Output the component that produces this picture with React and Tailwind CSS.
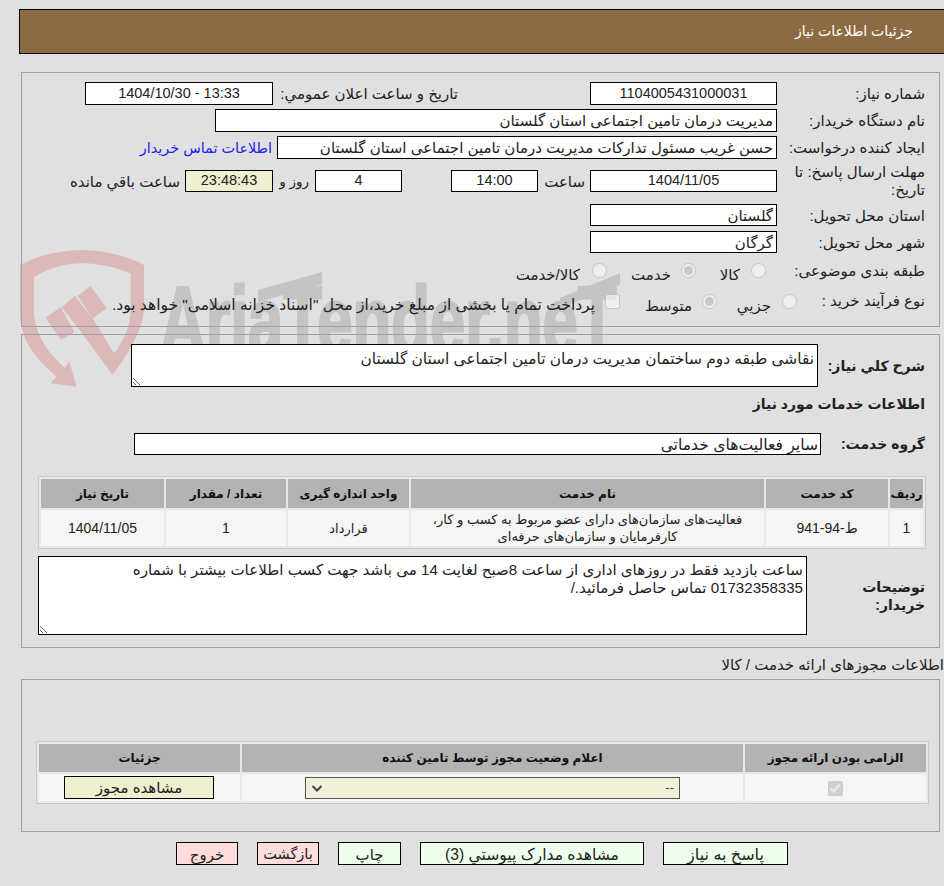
const fieldBox = 'border border-black bg-white px-[3px] flex items-center overflow-hidden whitespace-nowrap';

function Field({ className, center, children }) {
  return (
    <div className={`${fieldBox} ${center ? 'justify-center text-[14.5px]' : 'pt-[2px]'} ${className}`} dir="rtl">
      {children}
    </div>
  );
}

function Label({ children }) {
  return <div className="w-[148px] shrink-0 pt-[2px] text-[#222]">{children}</div>;
}

function Radio({ checked, className }) {
  return <input type="radio" disabled checked={checked} readOnly className={`w-[15px] h-[15px] m-0 shrink-0 ${className}`} />;
}

function Watermark() {
  return (
    <div className="absolute left-0 top-0 w-[944px] h-[400px] overflow-hidden pointer-events-none">
      <svg className="absolute left-[10px] top-[245px]" width="140" height="150" viewBox="0 0 420 450">
        <path
          d="M30 60 C90 30 150 15 215 15 C280 15 345 30 402 60 L402 190 C400 250 360 320 308 390 L205 250 L245 215 L312 325 C345 285 362 240 362 190 L362 85 C310 65 260 55 215 55 C165 55 115 70 72 97 L72 200 C75 270 115 325 165 368 L178 350 L200 425 L122 415 L140 395 C70 335 30 280 30 200 Z"
          fill="#dcb9b9"
        />
        <path d="M107 218 L152 187 L193 262 L153 285 Z M155 187 L195 153 L245 217 L205 250 Z M203 153 L242 123 L290 190 L248 220 Z" fill="#dcb9b9" />
      </svg>
      <div className="absolute left-[160px] top-[266px] origin-top-left scale-x-[0.66] font-['Liberation_Sans',sans-serif] font-bold text-[96px] leading-[110px] text-[#c4c4c4] [-webkit-text-stroke:3px_#c4c4c4] whitespace-nowrap" dir="ltr">
        AriaTender.neT
      </div>
      <svg className="absolute left-[250px] top-[268px]" width="380" height="40" viewBox="0 0 380 40">
        <path d="M8 22 L72 4 L72 16 L8 34 Z M310 30 L370 5 L370 17 L310 40 Z" fill="#c4c4c4" />
      </svg>
    </div>
  );
}

function Th({ className, children }) {
  return <th className={`bg-[#b3b3b3] font-bold text-[12px] text-[#111] text-center p-0 ${className}`}>{children}</th>;
}

function Td({ className, children }) {
  return <td className={`bg-[#f5f5f5] text-center text-[13px] text-[#222] p-0 leading-[17px] ${className}`}>{children}</td>;
}

function FooterButton({ className, children }) {
  return (
    <div className={`h-[23px] border border-black flex items-center justify-center text-[#222] pt-[3px] ${className}`}>
      {children}
    </div>
  );
}

export default function App() {
  return (
    <div className="relative w-[944px] h-[886px] overflow-hidden bg-[#e0e0e0] font-['Liberation_Sans','DejaVu_Sans',sans-serif] text-[15px] text-[#222]" dir="rtl">
      <Watermark />
      <div className="relative pt-[9px]">
        <div className="ml-[19px] -mr-[2px] h-[45px] bg-[#8c6b42] border border-black flex items-center pr-[32px] pb-[1px] text-[14px] text-white">
          جزئیات اطلاعات نیاز
        </div>

        <div className="mt-[18px] ml-[21px] mr-[4px] h-[255px] border border-[#a0a0a0] pr-[14px] pt-[9px]">
          <div className="flex items-center h-[23px]">
            <Label>شماره نیاز:</Label>
            <Field center className="w-[187px] h-[23px] shrink-0">1104005431000031</Field>
            <div className="mr-[132px] w-[180px] pt-[2px] whitespace-nowrap">تاریخ و ساعت اعلان عمومي:</div>
            <Field center className="w-[188px] h-[23px] mr-[5px]">13:33 - 1404/10/30</Field>
          </div>
          <div className="flex items-center h-[23px] mt-[4px]">
            <Label>نام دستگاه خریدار:</Label>
            <Field className="w-[562px] h-[23px]">مدیریت درمان تامین اجتماعی استان گلستان</Field>
          </div>
          <div className="flex items-center h-[23px] mt-[4px]">
            <Label>ایجاد کننده درخواست:</Label>
            <Field className="w-[500px] h-[23px]">حسن غریب مسئول تدارکات مدیریت درمان تامین اجتماعی استان گلستان</Field>
            <a href="#" className="mr-[5px] pt-[2px] text-[14.4px] text-[#2222ee] whitespace-nowrap">اطلاعات تماس خریدار</a>
          </div>
          <div className="flex items-center h-[38px] mt-[3px]">
            <div className="w-[148px] shrink-0 leading-[18px]">مهلت ارسال پاسخ: تا تاریخ:</div>
            <Field center className="w-[187px] h-[22px] shrink-0">1404/11/05</Field>
            <div className="w-[52px] shrink-0 pr-[5px] pt-[2px]">ساعت</div>
            <Field center className="w-[87px] h-[22px] shrink-0">14:00</Field>
            <div className="w-[49px] shrink-0" />
            <Field center className="w-[87px] h-[22px] shrink-0">4</Field>
            <div className="w-[42px] shrink-0 pr-[6px] pt-[2px] text-[13.5px] whitespace-nowrap">روز و</div>
            <Field center className="w-[88px] h-[22px] shrink-0 !bg-[#f0f0d0]">23:48:43</Field>
            <div className="mr-[5px] pt-[2px] whitespace-nowrap">ساعت باقي مانده</div>
          </div>
          <div className="flex items-center h-[22px] mt-[4px]">
            <Label>استان محل تحویل:</Label>
            <Field className="w-[187px] h-[22px]">گلستان</Field>
          </div>
          <div className="flex items-center h-[22px] mt-[5px]">
            <Label>شهر محل تحویل:</Label>
            <Field className="w-[187px] h-[22px]">گرگان</Field>
          </div>
          <div className="flex items-center h-[20px] mt-[7px]">
            <Label>طبقه بندی موضوعی:</Label>
            <Radio className="mr-[11px]" />
            <div className="w-[55px] pr-[11px] pt-[10px]">کالا</div>
            <Radio checked />
            <div className="w-[74px] pr-[10px] pt-[10px]">خدمت</div>
            <Radio />
            <div className="pr-[12px] pt-[10px]">کالا/خدمت</div>
          </div>
          <div className="flex items-center h-[20px] mt-[11px]">
            <div className="w-[128px] shrink-0">نوع فرآیند خرید :</div>
            <Radio />
            <div className="w-[65px] pr-[11px] pt-[10px]">جزيي</div>
            <Radio checked />
            <div className="w-[82px] pr-[10px] pt-[10px]">متوسط</div>
            <input type="checkbox" disabled className="w-[15px] h-[15px] m-0 shrink-0" />
            <div className="pr-[10px] pt-[8px] text-[15.5px] whitespace-nowrap">پرداخت تمام یا بخشی از مبلغ خرید،از محل "اسناد خزانه اسلامی" خواهد بود.</div>
          </div>
        </div>

        <div className="mt-[7px] ml-[21px] mr-[4px] h-[314px] border border-[#a0a0a0] pr-[14px] pt-[9px]">
          <div className="flex items-center h-[43px]">
            <div className="w-[107px] shrink-0 font-bold text-[14px] pt-[2px]">شرح کلي نیاز:</div>
            <textarea
              readOnly
              defaultValue="نقاشی طبقه دوم ساختمان مدیریت درمان تامین اجتماعی استان گلستان"
              className="w-[687px] h-[43px] border border-black bg-white px-[3px] pt-[2px] text-[15.4px] outline-none resize block"
            />
          </div>
          <div className="font-bold text-[14px] mt-[7px] h-[20px]">اطلاعات خدمات مورد نیاز</div>
          <div className="flex items-center h-[22px] mt-[19px]">
            <div className="w-[104px] shrink-0 font-bold text-[14px]">گروه خدمت:</div>
            <Field className="w-[687px] h-[22px] !px-[2px] text-[15.6px]">سایر فعالیت‌های خدماتی</Field>
          </div>
          <div className="w-[888px] h-[73px] mt-[21px] -mr-[1px] border border-[#c8c8c8] bg-[#e8e8e8]">
            <table className="w-[886px] h-[71px] table-fixed border-separate border-spacing-[2px]">
              <colgroup>
                <col className="w-[33px]" />
                <col className="w-[122px]" />
                <col className="w-[353px]" />
                <col className="w-[121px]" />
                <col className="w-[120px]" />
                <col />
              </colgroup>
              <thead>
                <tr className="h-[29px]">
                  <Th>ردیف</Th>
                  <Th>کد خدمت</Th>
                  <Th>نام خدمت</Th>
                  <Th>واحد اندازه گیری</Th>
                  <Th>تعداد / مقدار</Th>
                  <Th>تاریخ نیاز</Th>
                </tr>
              </thead>
              <tbody>
                <tr>
                  <Td className="!text-[14px]">1</Td>
                  <Td className="!text-[14px]">ط-94-941</Td>
                  <Td>فعالیت‌های سازمان‌های دارای عضو مربوط به کسب و کار، کارفرمایان و سازمان‌های حرفه‌ای</Td>
                  <Td>قرارداد</Td>
                  <Td className="!text-[14px]">1</Td>
                  <Td className="!text-[14px]">1404/11/05</Td>
                </tr>
              </tbody>
            </table>
          </div>
          <div className="flex items-center h-[79px] mt-[7px]">
            <div className="w-[118px] shrink-0 font-bold text-[14px] leading-[18px] pl-[40px]">توضیحات خریدار:</div>
            <textarea
              readOnly
              defaultValue="ساعت بازدید فقط در روزهای اداری از ساعت 8صبح لغایت 14 می باشد جهت کسب اطلاعات بیشتر با شماره 01732358335 تماس حاصل فرمائید./"
              className="w-[769px] h-[79px] border border-black bg-white px-[3px] pt-[4px] text-[15.1px] outline-none resize block leading-[18px]"
            />
          </div>
        </div>

        <div className="h-[31px] pt-[3px] flex items-center whitespace-nowrap">اطلاعات مجوزهای ارائه خدمت / کالا</div>

        <div className="ml-[21px] mr-[4px] h-[153px] border border-[#a0a0a0] pr-[10px] pt-[61px]">
          <div className="w-[893px] h-[63px] border border-[#c8c8c8] bg-[#e8e8e8]">
            <table className="w-[891px] h-[61px] table-fixed border-separate border-spacing-[2px]">
              <colgroup>
                <col className="w-[181px]" />
                <col className="w-[501px]" />
                <col />
              </colgroup>
              <thead>
                <tr className="h-[28px]">
                  <Th>الزامی بودن ارائه مجوز</Th>
                  <Th>اعلام وضعیت مجوز توسط تامین کننده</Th>
                  <Th>جزئیات</Th>
                </tr>
              </thead>
              <tbody>
                <tr>
                  <Td>
                    <input type="checkbox" disabled defaultChecked className="w-[15px] h-[15px] m-0 align-middle" />
                  </Td>
                  <Td>
                    <div className="mr-[63px] w-[375px] h-[22px] border border-[#555] bg-[#f0f0d8] flex items-center justify-between px-[4px] text-[#444]">
                      <span className="pr-[1px]">--</span>
                      <svg width="12" height="12" viewBox="0 0 12 12" className="ml-[1px]">
                        <path d="M1.5 4 L6 8.5 L10.5 4" fill="none" stroke="#444" strokeWidth="2" />
                      </svg>
                    </div>
                  </Td>
                  <Td>
                    <div className="mr-[26px] w-[150px] h-[23px] border border-black bg-[#efefd0] text-[15px] flex items-center justify-center">مشاهده مجوز</div>
                  </Td>
                </tr>
              </tbody>
            </table>
          </div>
        </div>

        <div className="flex mt-[10px] mr-[156px] gap-[19px]">
          <FooterButton className="w-[125px] bg-[#eeffee] text-[16px]">پاسخ به نیاز</FooterButton>
          <FooterButton className="w-[224px] bg-[#eeffee] text-[15.6px]">مشاهده مدارک پیوستي (3)</FooterButton>
          <FooterButton className="w-[63px] bg-[#eeffee]">چاپ</FooterButton>
          <FooterButton className="w-[62px] bg-[#ffdddd] text-[14.5px]">بازگشت</FooterButton>
          <FooterButton className="w-[62px] bg-[#ffdddd]">خروج</FooterButton>
        </div>
      </div>
    </div>
  );
}
